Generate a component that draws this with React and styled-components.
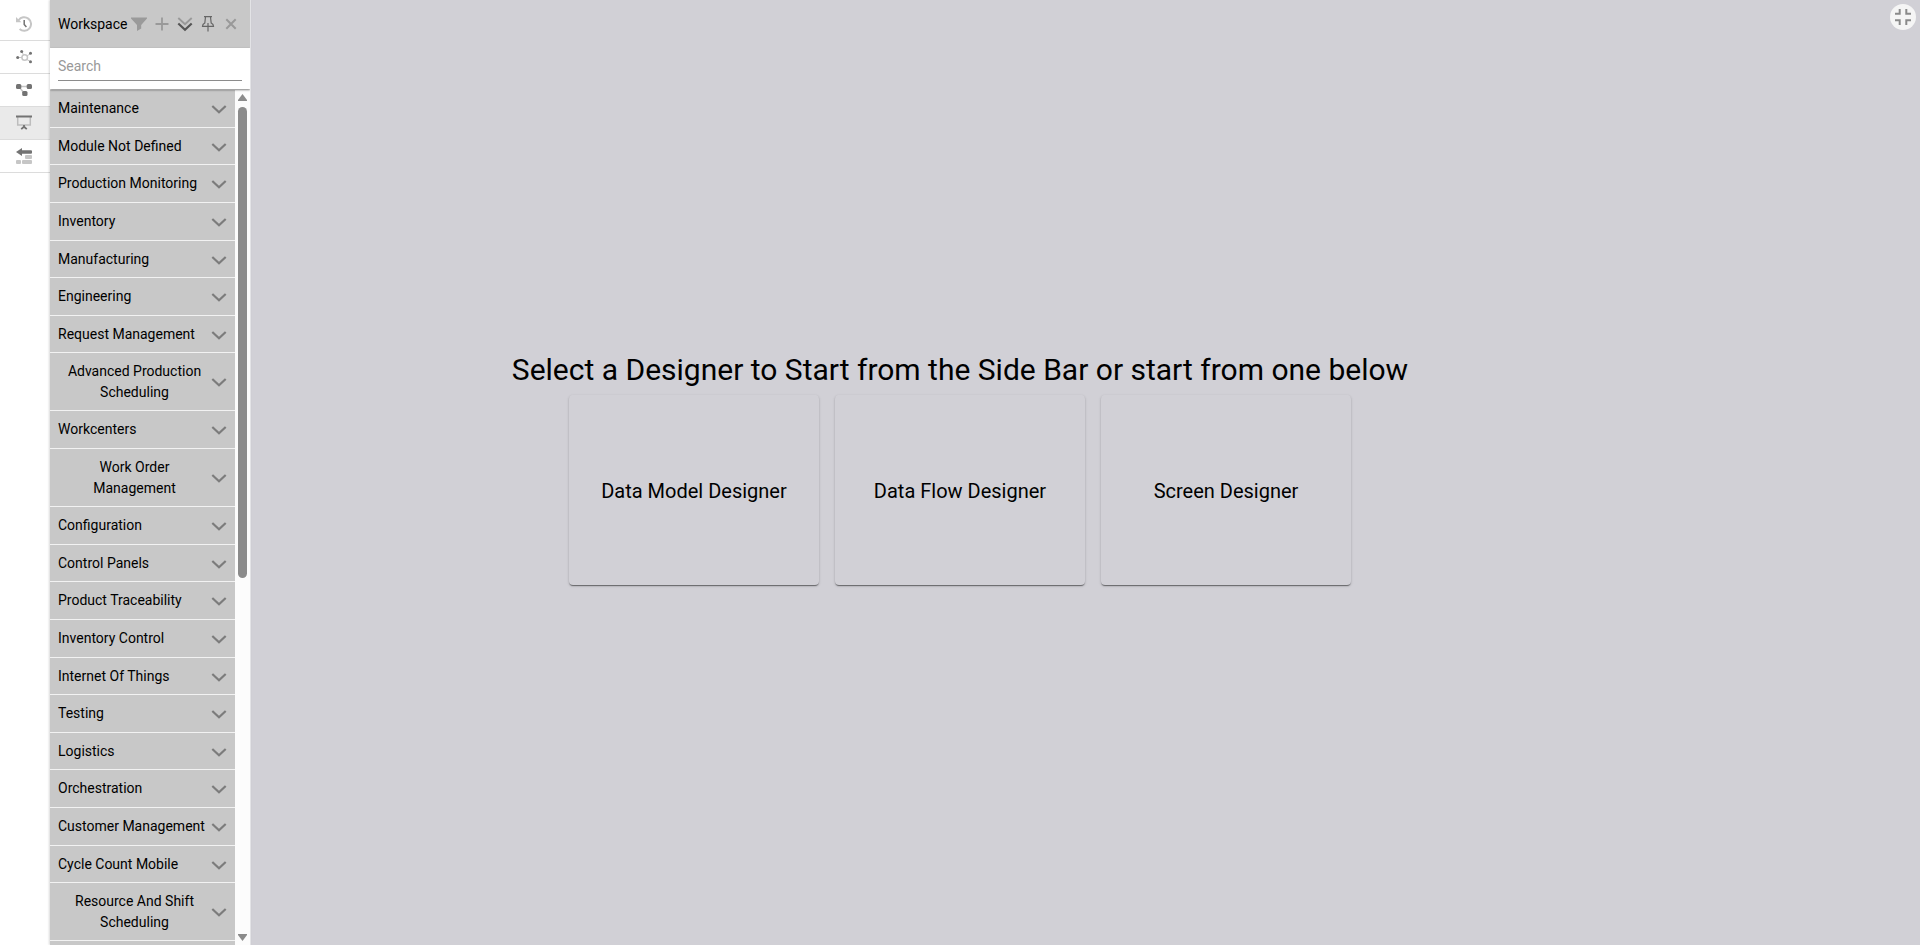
import React from "react";
import styled, { createGlobalStyle } from "styled-components";

const GlobalStyle = createGlobalStyle`
  *, *::before, *::after { box-sizing: border-box; }
  html, body, #root { height: 100%; }
  body {
    margin: 0;
    overflow: hidden;
    font-family: Roboto, "Liberation Sans", sans-serif;
    font-size: 14px;
    line-height: 21px;
    color: #000;
    background: #d1d0d6;
  }
  button {
    margin: 0;
    padding: 0;
    border: 0;
    background: none;
    font: inherit;
    color: inherit;
    cursor: pointer;
  }
`;

const Shell = styled.div`
  display: grid;
  grid-template: minmax(0, 1fr) / minmax(0, 1fr);
  height: 100vh;
`;

const Main = styled.main`
  grid-area: 1 / 1;
  display: flex;
  flex-direction: column;
  align-items: center;
  justify-content: center;
  background: #d1d0d6;
`;

const Heading = styled.h1`
  margin: 0;
  font-size: 30px;
  line-height: 35px;
  font-weight: 400;
`;

const Cards = styled.div`
  display: flex;
  gap: 16px;
  padding: 8px;
`;

const Card = styled.button`
  width: 250px;
  height: 190px;
  padding-top: 2px;
  border-radius: 4px;
  font-size: 20px;
  line-height: 24px;
  box-shadow: 0 2px 1px -1px rgba(0, 0, 0, 0.3), 0 1px 1px 0 rgba(0, 0, 0, 0.2),
    0 1px 3px 0 rgba(0, 0, 0, 0.16);
`;

const FullscreenButton = styled.button`
  position: absolute;
  top: 4px;
  right: 4px;
  display: grid;
  place-items: center;
  width: 26px;
  height: 26px;
  border-radius: 50%;
  background: #f5f5f5;
`;

const Sidebar = styled.div`
  grid-area: 1 / 1;
  justify-self: start;
  display: flex;
  min-height: 0;
  z-index: 1;
`;

const Rail = styled.nav`
  display: flex;
  flex-direction: column;
  width: 50px;
  padding-top: 8px;
  background: #fff;
`;

const RailButton = styled.button`
  display: grid;
  place-items: center;
  height: 33px;
  padding-right: 2px;
  border-bottom: 1px solid #dcdcdc;
  background: ${(p) => (p.$active ? "#eaeaea" : "#fff")};
`;

const Panel = styled.aside`
  display: flex;
  flex-direction: column;
  width: 201px;
  overflow: hidden;
  border-right: 1px solid #e3e3e6;
  background: #fcfcfc;
  box-shadow: -1px 0 2px rgba(0, 0, 0, 0.15);
`;

const PanelHeader = styled.header`
  display: flex;
  align-items: center;
  justify-content: space-between;
  height: 48px;
  padding: 0 8px;
  background: #c8c8c8;
`;

const PanelTitle = styled.h2`
  margin: 0;
  font-size: 14px;
  font-weight: 400;
`;

const Tools = styled.div`
  display: flex;
`;

const ToolButton = styled.button`
  display: grid;
  place-items: center;
  width: 23px;
  height: 24px;
`;

const SearchBar = styled.div`
  display: flex;
  height: 41px;
  padding: 4px 8px 8px;
  background: #fff;
  box-shadow: 0 1px 2px rgba(0, 0, 0, 0.5);
  z-index: 1;
`;

const SearchInput = styled.input`
  flex: 1;
  min-width: 0;
  padding: 0;
  border: 0;
  border-bottom: 1px solid #8c8c8c;
  border-radius: 0;
  outline: 0;
  background: none;
  font: inherit;
  &::placeholder { color: #999; opacity: 1; }
`;

const ListArea = styled.div`
  display: flex;
  flex: 1;
  min-height: 0;
`;

const ModuleList = styled.ul`
  flex: 1;
  margin: 0;
  padding: 1px 0 0;
  overflow-y: auto;
  scrollbar-width: none;
  list-style: none;
`;

const ModuleItem = styled.li`
  display: flex;
  min-height: 38px;
  border-bottom: 1px solid #f2f2f2;
  background: #c8c8c8;
  &:nth-child(5n + 2), &:nth-child(5n + 5) { min-height: 37px; }
`;

const ModuleButton = styled.button`
  flex: 1;
  display: flex;
  align-items: flex-start;
  justify-content: space-between;
  padding: 8px 8px 7px;
  > svg { align-self: center; }
`;

const ScrollBar = styled.div`
  display: flex;
  flex-direction: column;
  align-items: center;
  gap: 6px;
  width: 15px;
  padding: 5px 0 4px;
`;

const Thumb = styled.div`
  flex: 473;
  width: 9px;
  border-radius: 5px;
  background: #8b8b8b;
`;

const TrackRest = styled.div`
  flex: 346;
`;

const Svg = styled.svg`
  display: block;
  flex: none;
`;

const Icon = ({ size = 16, children }) => (
  <Svg width={size} height={size} viewBox={`0 0 ${size} ${size}`} fill="none" aria-hidden="true">
    {children}
  </Svg>
);

const DARK = "#737373";
const LIGHT = "#c6c6c6";

const HistoryIcon = () => (
  <Icon>
    <path d="M2.6 4.2A6.8 6.8 0 1 1 3.6 13" stroke={LIGHT} strokeWidth="2" />
    <path d="M0 1v5.2h5.4z" fill={LIGHT} />
    <path d="M8.2 4v4.4l2.2 2.6" stroke={DARK} strokeWidth="1.5" />
  </Icon>
);

const ModelIcon = () => (
  <Icon>
    <path d="M2 8.500h4M6 3l1.500 3M14.500 4.500l-3.500 2.500M14.300 12.500l-3.300-2" stroke={LIGHT} />
    <circle cx="8.700" cy="8.500" r="2.800" stroke={LIGHT} strokeWidth="1.500" />
    <circle cx="1.700" cy="8.500" r="1.500" fill={DARK} />
    <circle cx="5.700" cy="2.500" r="1.500" fill={DARK} />
    <circle cx="14.500" cy="4.200" r="1.500" fill={DARK} />
    <circle cx="14.500" cy="12.700" r="1.500" fill={DARK} />
  </Icon>
);

const FlowIcon = () => (
  <Icon>
    <path d="M5 4.500h6M4 6l4 5" stroke={LIGHT} strokeWidth="1.500" />
    <rect x="0" y="2" width="5.300" height="5" rx="1.500" fill={DARK} />
    <rect x="10.700" y="2" width="5.300" height="5" rx="1.500" fill={DARK} />
    <rect x="6.200" y="9" width="5.300" height="5" rx="1.500" fill={DARK} />
  </Icon>
);

const ScreenIcon = () => (
  <Icon>
    <path d="M1.700 2v8h12.600V2" stroke="#bdbdbd" strokeWidth="1.500" />
    <path d="M0 1.500h16" stroke={DARK} strokeWidth="2" />
    <path d="M7.100 10h1.800v1.200l2.500 2.300-1.200 1.300L8 12.900l-2.200 1.900-1.200-1.300 2.500-2.300z" fill={DARK} />
  </Icon>
);

const ActionIcon = () => (
  <Icon>
    <rect x="9" y="7" width="7" height="4" rx="1" fill={LIGHT} />
    <rect x="0" y="12" width="5" height="4" rx="1" fill={LIGHT} />
    <rect x="6" y="12" width="10" height="4" rx="1" fill={LIGHT} />
    <path d="M0 4l6-4v2.300h9a1 1 0 0 1 1 1v1.400a1 1 0 0 1-1 1H6V8z" fill={DARK} />
  </Icon>
);

const FilterIcon = () => (
  <Icon>
    <path d="M0 1.500h16v1L10.200 9v3.500L6 15V9L0 2.500z" fill="#9a9a9a" />
  </Icon>
);

const PlusIcon = () => (
  <Icon>
    <path d="M8 1.500v13M1.500 8h13" stroke="#999" strokeWidth="1.800" />
  </Icon>
);

const ExpandAllIcon = () => (
  <Icon>
    <path d="M1.300 2L8 8.200l6.700-6.200" stroke="#999" strokeWidth="1.900" />
    <path d="M1.300 7.500L8 13.700l6.700-6.200" stroke="#555" strokeWidth="2.200" />
  </Icon>
);

const PinIcon = () => (
  <Icon>
    <path d="M4 .7h8M5.500 1L4.800 7C3.200 7.800 2.500 9 2.500 10.300h11C13.500 9 12.800 7.800 11.200 7L10.500 1" stroke="#666" strokeWidth="1.200" />
    <path d="M8 7v8.500" stroke="#666" strokeWidth="1.200" />
  </Icon>
);

const CloseIcon = () => (
  <Icon>
    <path d="M3.300 3.300l9.400 9.400M12.700 3.300l-9.400 9.400" stroke="#999" strokeWidth="2" />
  </Icon>
);

const ChevronIcon = () => (
  <Icon>
    <path d="M1.300 5L8 11.300l6.700-6.300" stroke="#7c7c7c" strokeWidth="2.200" />
  </Icon>
);

const ExitFullscreenIcon = () => (
  <Icon>
    <path d="M0 4.700h4.700V0M11.300 0v4.700H16M0 11.300h4.700V16M16 11.300h-4.700V16" stroke="#8a8a8a" strokeWidth="2" />
  </Icon>
);

const RAIL = [
  { label: "History", Glyph: HistoryIcon },
  { label: "Data Model", Glyph: ModelIcon },
  { label: "Data Flow", Glyph: FlowIcon },
  { label: "Screen", Glyph: ScreenIcon, active: true },
  { label: "Actions", Glyph: ActionIcon },
];

const TOOLS = [
  { label: "Filter", Glyph: FilterIcon },
  { label: "Add", Glyph: PlusIcon },
  { label: "Expand all", Glyph: ExpandAllIcon },
  { label: "Pin", Glyph: PinIcon },
  { label: "Close", Glyph: CloseIcon },
];

const MODULES = [
  "Maintenance",
  "Module Not Defined",
  "Production Monitoring",
  "Inventory",
  "Manufacturing",
  "Engineering",
  "Request Management",
  "Advanced Production Scheduling",
  "Workcenters",
  "Work Order Management",
  "Configuration",
  "Control Panels",
  "Product Traceability",
  "Inventory Control",
  "Internet Of Things",
  "Testing",
  "Logistics",
  "Orchestration",
  "Customer Management",
  "Cycle Count Mobile",
  "Resource And Shift Scheduling",
];

const DESIGNERS = ["Data Model Designer", "Data Flow Designer", "Screen Designer"];

export default function App() {
  return (
    <Shell>
      <GlobalStyle />
      <Sidebar>
        <Rail aria-label="Designers">
          {RAIL.map(({ label, Glyph, active }) => (
            <RailButton key={label} type="button" aria-label={label} $active={active}>
              <Glyph />
            </RailButton>
          ))}
        </Rail>
        <Panel>
          <PanelHeader>
            <PanelTitle>Workspace</PanelTitle>
            <Tools>
              {TOOLS.map(({ label, Glyph }) => (
                <ToolButton key={label} type="button" aria-label={label}>
                  <Glyph />
                </ToolButton>
              ))}
            </Tools>
          </PanelHeader>
          <SearchBar>
            <SearchInput type="text" placeholder="Search" aria-label="Search" />
          </SearchBar>
          <ListArea>
            <ModuleList>
              {MODULES.map((name) => (
                <ModuleItem key={name}>
                  <ModuleButton type="button" aria-expanded="false">
                    <span>{name}</span>
                    <ChevronIcon />
                  </ModuleButton>
                </ModuleItem>
              ))}
              <ModuleItem />
            </ModuleList>
            <ScrollBar aria-hidden="true">
              <Svg width="9" height="7" viewBox="0 0 9 7">
                <path d="M4.500 0L9 6v1H0V6z" fill="#8b8b8b" />
              </Svg>
              <Thumb />
              <TrackRest />
              <Svg width="9" height="7" viewBox="0 0 9 7">
                <path d="M4.500 7L9 1V0H0v1z" fill="#8b8b8b" />
              </Svg>
            </ScrollBar>
          </ListArea>
        </Panel>
      </Sidebar>
      <Main>
        <Heading>Select a Designer to Start from the Side Bar or start from one below</Heading>
        <Cards>
          {DESIGNERS.map((name) => (
            <Card key={name} type="button">
              {name}
            </Card>
          ))}
        </Cards>
        <FullscreenButton type="button" aria-label="Exit full screen">
          <ExitFullscreenIcon />
        </FullscreenButton>
      </Main>
    </Shell>
  );
}
